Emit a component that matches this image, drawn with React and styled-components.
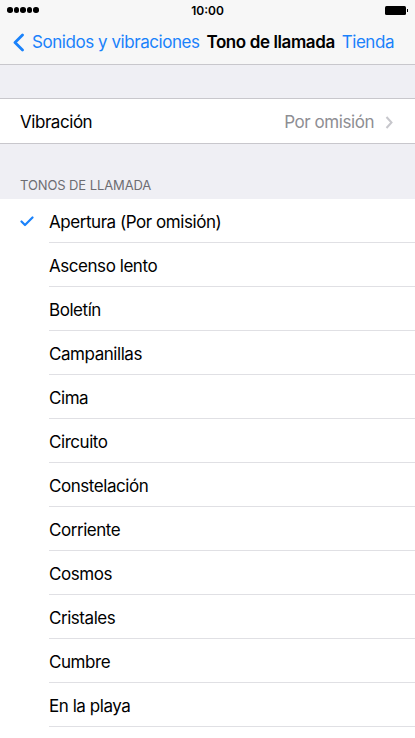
import styled, { createGlobalStyle } from "styled-components";

const GlobalStyle = createGlobalStyle`
  html,
  body {
    margin: 0;
    padding: 0;
    background: #ffffff;
    font-family: Inter, "Liberation Sans", sans-serif;
    -webkit-font-smoothing: antialiased;
  }

  * {
    box-sizing: border-box;
  }
`;

const Screen = styled("div")`
  width: 415px;
  height: 738px;
  overflow: hidden;
  background: #ffffff;
  display: flex;
  flex-direction: column;
`;

const TopBar = styled("div")`
  background: #f7f7f7;
  border-bottom: 1px solid #c8c7cc;
`;

const StatusBar = styled("div")`
  height: 20px;
  display: flex;
  align-items: center;
  justify-content: space-between;
  padding: 0 7px 0 7px;
  position: relative;
`;

const Dots = styled("div")`
  display: flex;
  gap: 1px;
`;

const Dot = styled("span")`
  width: 5.5px;
  height: 5.5px;
  border-radius: 50%;
  background: #000;
`;

const Clock = styled("div")`
  position: absolute;
  left: 0;
  right: 0;
  text-align: center;
  font-size: 12px;
  font-weight: 600;
  color: #000;
`;

const Battery = styled("div")`
  display: flex;
  align-items: center;
`;

const BatteryBody = styled("span")`
  width: 21px;
  height: 9px;
  border-radius: 1.5px;
  background: #000;
`;

const BatteryNub = styled("span")`
  width: 1.5px;
  height: 3px;
  margin-left: 1px;
  background: #000;
`;

const NavBar = styled("div")`
  height: 44px;
  display: flex;
  align-items: center;
  padding: 0 21px 0 12px;
  font-size: 17px;
  letter-spacing: -0.45px;
`;

const BackButton = styled("div")`
  display: flex;
  align-items: center;
  color: #1a82fb;
  gap: 8px;
`;

const NavTitle = styled("div")`
  flex: 1;
  text-align: center;
  font-weight: 600;
  color: #000;
  letter-spacing: -0.4px;
`;

const NavAction = styled("div")`
  color: #1a82fb;
`;

const Gap = styled("div")`
  height: ${(p) => p.$h}px;
  background: #efeff4;
  border-bottom: 1px solid #c8c7cc;
`;

const SectionHeader = styled("div")`
  height: 56px;
  background: #efeff4;
  display: flex;
  align-items: flex-end;
  padding: 0 20px 6px;
  font-size: 13px;
  color: #6d6d72;
  letter-spacing: -0.1px;
  border-top: 1px solid #c8c7cc;
`;

const Group = styled("div")`
  background: #ffffff;
`;

const Row = styled("div")`
  height: 44px;
  display: flex;
  align-items: center;
  padding-left: ${(p) => p.$inset}px;
  position: relative;
  font-size: 17px;
  color: #000;
  letter-spacing: -0.45px;
`;

const RowBody = styled("div")`
  flex: 1;
  height: 100%;
  display: flex;
  align-items: center;
  justify-content: space-between;
  padding: 2px 22px 0 0;
  border-bottom: ${(p) => (p.$line ? "1px solid #e0e0e4" : "none")};
`;

const Value = styled("div")`
  display: flex;
  align-items: center;
  gap: 11px;
  color: #8e8e93;
`;

const Check = styled("svg")`
  position: absolute;
  left: 20px;
  top: 17px;
`;

const tones = [
  "Apertura (Por omisión)",
  "Ascenso lento",
  "Boletín",
  "Campanillas",
  "Cima",
  "Circuito",
  "Constelación",
  "Corriente",
  "Cosmos",
  "Cristales",
  "Cumbre",
  "En la playa",
];

export default function App() {
  return (
    <Screen>
      <GlobalStyle />
      <TopBar>
        <StatusBar>
          <Dots>
            {[0, 1, 2, 3, 4].map((i) => (
              <Dot key={i} />
            ))}
          </Dots>
          <Clock>10:00</Clock>
          <Battery>
            <BatteryBody />
            <BatteryNub />
          </Battery>
        </StatusBar>
        <NavBar>
          <BackButton>
            <svg width="12" height="22" viewBox="0 0 12 22">
              <path
                d="M10.5 4 L3 11.5 L10.5 19"
                fill="none"
                stroke="#1a82fb"
                strokeWidth="2.8"
                strokeLinecap="round"
                strokeLinejoin="round"
              />
            </svg>
            Sonidos y vibraciones
          </BackButton>
          <NavTitle>Tono de llamada</NavTitle>
          <NavAction>Tienda</NavAction>
        </NavBar>
      </TopBar>

      <Gap $h={34} />
      <Group>
        <Row $inset={20}>
          <RowBody>
            Vibración
            <Value>
              Por omisión
              <svg width="8" height="13" viewBox="0 0 8 13">
                <path
                  d="M1.5 1 L6.5 6.5 L1.5 12"
                  fill="none"
                  stroke="#c7c7cc"
                  strokeWidth="2"
                />
              </svg>
            </Value>
          </RowBody>
        </Row>
      </Group>
      <SectionHeader>TONOS DE LLAMADA</SectionHeader>
      <Group>
        {tones.map((t, i) => (
          <Row key={t} $inset={49}>
            {i === 0 && (
              <Check width="14" height="11" viewBox="0 0 14 11">
                <path
                  d="M1.5 5.5 L5 9 L12.5 1.5"
                  fill="none"
                  stroke="#1a82fb"
                  strokeWidth="2.2"
                  strokeLinecap="round"
                  strokeLinejoin="round"
                />
              </Check>
            )}
            <RowBody $line>{t}</RowBody>
          </Row>
        ))}
      </Group>
    </Screen>
  );
}
